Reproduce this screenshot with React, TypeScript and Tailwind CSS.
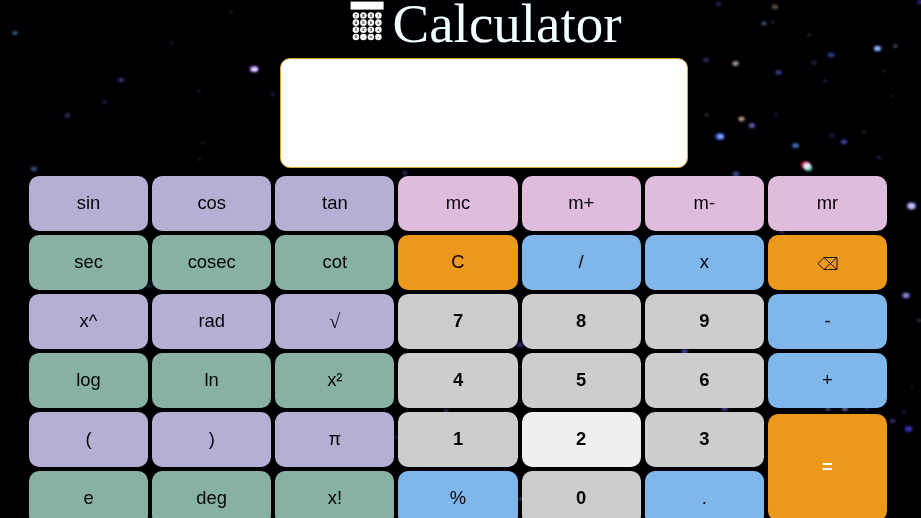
import React from 'react';

type Tone = 'violet' | 'green' | 'pink' | 'orange' | 'blue' | 'digit' | 'active';

const tones: Record<Tone, string> = {
  violet: 'bg-[#b5afd4]',
  green: 'bg-[#86b1a4]',
  pink: 'bg-[#dfbcdb]',
  orange: 'bg-[#eb981b]',
  blue: 'bg-[#7fb7ea]',
  digit: 'bg-[#cdcdcd] font-bold',
  active: 'bg-[#efefef] font-bold',
};

const keys: [string, Tone][] = [
  ['sin', 'violet'], ['cos', 'violet'], ['tan', 'violet'], ['mc', 'pink'], ['m+', 'pink'], ['m-', 'pink'], ['mr', 'pink'],
  ['sec', 'green'], ['cosec', 'green'], ['cot', 'green'], ['C', 'orange'], ['/', 'blue'], ['x', 'blue'], ['⌫', 'orange'],
  ['x^', 'violet'], ['rad', 'violet'], ['√', 'violet'], ['7', 'digit'], ['8', 'digit'], ['9', 'digit'], ['-', 'blue'],
  ['log', 'green'], ['ln', 'green'], ['x²', 'green'], ['4', 'digit'], ['5', 'digit'], ['6', 'digit'], ['+', 'blue'],
  ['(', 'violet'], [')', 'violet'], ['π', 'violet'], ['1', 'digit'], ['2', 'active'], ['3', 'digit'], ['=', 'orange'],
  ['e', 'green'], ['deg', 'green'], ['x!', 'green'], ['%', 'blue'], ['0', 'digit'], ['.', 'blue'],
];

// x, y, radius, colour, opacity
const stars: [number, number, number, string, number][] = [
  [15, 33, 2.8, '#4878b0', 0.7], [254, 69, 4.6, '#7a48c8', 0.9], [121, 80, 3, '#5050a8', 0.6],
  [105, 102, 2.8, '#303078', 0.5], [67.5, 115.5, 3, '#4c5088', 0.55], [34, 169, 3.2, '#3c6898', 0.75],
  [273, 94.5, 2.4, '#4040a0', 0.5], [171.5, 43, 2, '#303058', 0.6], [199, 90.5, 2, '#282838', 0.7],
  [231, 12, 2, '#303028', 0.6], [203, 143, 1.8, '#283828', 0.6], [199, 159, 2, '#282c28', 0.7],
  [718.5, 4, 2.8, '#4040a0', 0.5], [775, 7, 3.2, '#907058', 0.65], [764, 23.5, 2.6, '#586890', 0.75],
  [773, 22, 2, '#484048', 0.6], [809, 35, 2, '#404038', 0.6], [877.5, 48.5, 3.8, '#6090e8', 1],
  [895.5, 46, 2.4, '#706870', 0.7], [831, 55, 3.6, '#3848b0', 0.7], [814, 62.5, 2.8, '#404078', 0.55],
  [706, 60, 3, '#404880', 0.65], [735.5, 63.5, 3.2, '#b09c98', 0.9], [778.5, 72.5, 3.2, '#4848a8', 0.75],
  [825, 81, 2.4, '#303070', 0.5], [884, 71, 2, '#303030', 0.6], [893, 96, 1.8, '#303030', 0.6],
  [706.5, 115, 2.4, '#484030', 0.6], [741.5, 119, 3.2, '#c0a080', 0.9], [752, 125.5, 3.2, '#6868c0', 0.85],
  [776, 114.5, 2.4, '#303068', 0.5], [720, 136.5, 4.6, '#4068f0', 0.95], [795.5, 145.5, 3.4, '#4878c8', 0.85],
  [844, 142, 3.2, '#5058c8', 0.75], [832, 135.5, 2.4, '#3838a0', 0.5], [864, 131.5, 2, '#404038', 0.6],
  [879, 157.5, 2.6, '#303070', 0.5], [736, 174, 3.4, '#5058b8', 0.75], [920, 2, 2.8, '#5038c0', 0.7],
  [911.5, 206, 4.6, '#8080d8', 1], [906, 295.5, 4, '#6460c0', 0.95], [919, 320.5, 2.4, '#504868', 0.7],
  [908.5, 429, 4, '#4038c8', 0.8], [892.5, 421, 3, '#403888', 0.7], [904, 412, 2.4, '#303070', 0.5],
  [912, 387, 2, '#303030', 0.5], [684.5, 351.5, 3.4, '#4848b0', 0.85], [724.5, 408.5, 3.2, '#5848a8', 0.8],
  [828, 409, 2.6, '#6070a0', 0.7], [845, 409, 3, '#7080b8', 0.75], [867, 408, 2.2, '#3060a0', 0.6],
  [782, 232, 2.8, '#483088', 0.6], [405, 173, 2.8, '#384078', 0.65], [520, 345, 3.2, '#383888', 0.75],
  [446, 411, 2.6, '#504878', 0.65], [396, 437, 2.4, '#383860', 0.6], [520.5, 499, 2, '#606070', 0.8],
  [149, 286, 3, '#183050', 0.7],
];

const Sky = () => (
  <svg className="absolute inset-0" width="921" height="518" aria-hidden="true">
    <defs>
      <filter id="glow" x="-100%" y="-100%" width="300%" height="300%">
        <feGaussianBlur stdDeviation="1.1" />
      </filter>
      <filter id="soft" x="-100%" y="-100%" width="300%" height="300%">
        <feGaussianBlur stdDeviation="0.8" />
      </filter>
    </defs>
    {stars.map(([x, y, r, fill, opacity], i) => (
      <ellipse key={i} cx={x} cy={y} rx={r} ry={r * 0.75} fill={fill} opacity={opacity} filter="url(#glow)" />
    ))}
    <ellipse cx="805.5" cy="165" rx="4.5" ry="4" fill="#c02858" filter="url(#glow)" />
    <ellipse cx="808.5" cy="168" rx="3.8" ry="3.2" fill="#48b090" filter="url(#glow)" />
    <g fill="#e8e8f8" filter="url(#soft)">
      <ellipse cx="807" cy="166" rx="3.6" ry="3.2" />
      <ellipse cx="254.5" cy="69.3" rx="3.4" ry="2.1" />
      <ellipse cx="877.5" cy="48.5" rx="2" ry="1.5" opacity="0.6" />
      <ellipse cx="720.5" cy="136.5" rx="2.4" ry="1.8" opacity="0.65" />
      <ellipse cx="911.5" cy="206" rx="3" ry="2.5" opacity="0.7" />
      <ellipse cx="906" cy="295.5" rx="2" ry="1.4" opacity="0.5" />
    </g>
  </svg>
);

const legends = ['7', '8', '9', '/', '4', '5', '6', 'x', '1', '2', '3', '+', '0', '.', '=', '-'];

const Logo = () => (
  <svg width="34" height="42" viewBox="0 0 34 42" className="shrink-0" aria-hidden="true">
    <rect x="0.6" y="1.6" width="33" height="8" fill="#fff" />
    {legends.map((t, i) => {
      const x = 5.9 + (i % 4) * 7.5;
      const y = 15.5 + Math.floor(i / 4) * 7.15;
      return (
        <g key={i}>
          <circle cx={x} cy={y} r="3.3" fill="#f4f4f4" />
          <text x={x} y={y + 1.5} textAnchor="middle" fontSize="4.2" fontWeight="bold" fontFamily="Liberation Sans, sans-serif" fill="#111">
            {t}
          </text>
        </g>
      );
    })}
  </svg>
);

export default function App() {
  return (
    <div className="relative h-[518px] w-[921px] overflow-hidden bg-[#000003] font-['Liberation_Sans',Arial,sans-serif]">
      <Sky />
      <main className="relative flex flex-col">
        <header className="flex h-[58px] pl-[350px]">
          <Logo />
          <h1 className="ml-[8.5px] font-['Liberation_Serif','Times_New_Roman',serif] text-[55px] leading-[47px] text-[#f0ffff]">
            Calculator
          </h1>
        </header>
        <div className="ml-[280px] h-[110px] w-[408px] rounded-[10px] border border-[#dba632] bg-white" />
        <div className="ml-[29px] mt-[7.5px] grid w-[858px] auto-rows-[55px] grid-cols-7 gap-x-[4.1px] gap-y-[4.05px]">
          {keys.map(([label, tone]) => (
            <button
              key={label}
              className={`flex items-center justify-center rounded-[10px] pt-[0.6px] text-[18.4px] leading-none ${tones[tone]} ${
                label === '='
                  ? 'row-span-2 mt-[2px] h-[107px] font-bold text-white'
                  : label === '√'
                    ? "font-['Liberation_Serif',serif] text-[20px] text-[#050508]"
                    : 'text-[#050508]'
              }`}
            >
              {label === '⌫' ? (
                <svg width="21" height="15" viewBox="0 0 21 15" className="mt-[3px]" fill="none" stroke="#1a1000" strokeWidth="1" aria-label="⌫">
                  <path d="M.8 7.5 7 1.5h13v12H7zM7 1.5l13 12M20 1.5l-13 12" />
                </svg>
              ) : (
                label
              )}
            </button>
          ))}
        </div>
      </main>
    </div>
  );
}
